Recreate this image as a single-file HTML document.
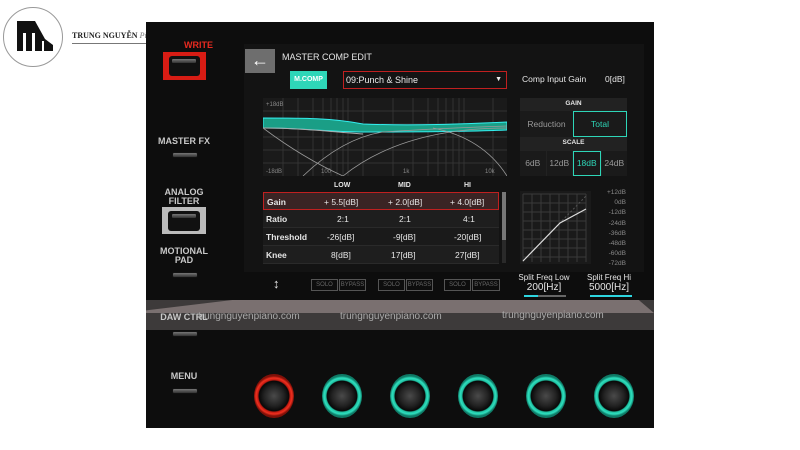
<!DOCTYPE html>
<html><head><style>
*{margin:0;padding:0;box-sizing:border-box}
body{width:800px;height:450px;background:#fff;position:relative;overflow:hidden;font-family:"Liberation Sans",sans-serif}
.a{position:absolute}
.lbl{position:absolute;color:#c8c8c8;font-size:9px;font-weight:bold;text-align:center;width:60px;line-height:9px}
.btn{position:absolute;width:26px;height:6px;background:linear-gradient(#777,#333);border-radius:2px;border:1px solid #111}
.t{position:absolute;color:#e6e6e6;font-size:9px}
.sb{position:absolute;border:1px solid #555;color:#666;font-size:6px;height:12px;line-height:10px;text-align:center}
.knob{position:absolute;width:40px;height:44px;border-radius:50%;background:radial-gradient(circle at 50% 50%,#4a4a4a 0,#222 10px,#080808 15px,#1fbfa0 16px,#2fe0bf 18px,#0e7a66 20px)}
.knob.r{background:radial-gradient(circle at 50% 50%,#4a4a4a 0,#222 10px,#080808 15px,#c01a10 16px,#f03020 18px,#801008 20px)}
.tr{position:absolute;left:263px;width:236px;height:18px;border-bottom:1px solid #2a2a2a;color:#e6e6e6;font-size:8.5px}
.tr span{position:absolute;top:4px}
</style></head><body>
<!-- logo -->
<div class="a" style="left:3px;top:7px;width:60px;height:60px;border-radius:50%;border:1px solid #999;background:#fff"></div>
<svg class="a" style="left:15px;top:19px" width="40" height="34" viewBox="0 0 40 34"><path d="M2 2H20L30 20L38 26V32H2Z" fill="#111"/><rect x="8" y="14" width="3" height="18" fill="#fff"/><rect x="17" y="14" width="3" height="18" fill="#fff"/><rect x="27" y="22" width="2" height="10" fill="#fff"/></svg>
<div class="a" style="left:72px;top:31px;font-family:'Liberation Serif',serif;font-size:8px;font-weight:bold;color:#222">TRUNG NGUYỄN <i style="font-weight:normal;color:#777">Pi</i></div>
<div class="a" style="left:72px;top:43px;width:75px;height:1px;background:#777"></div>
<!-- device -->
<div class="a" style="left:146px;top:22px;width:508px;height:406px;background:#0d0d0d"></div>
<div class="a" style="left:184px;top:40px;color:#e82a20;font-size:9px;font-weight:bold">WRITE</div>
<div class="a" style="left:163px;top:52px;width:43px;height:28px;background:#d81c14"></div>
<div class="a" style="left:169px;top:56px;width:31px;height:20px;background:#111;border-radius:3px"></div>
<div class="btn" style="left:171px;top:58px"></div>
<div class="lbl" style="left:154px;top:137px">MASTER FX</div>
<div class="btn" style="left:172px;top:152px"></div>
<div class="lbl" style="left:154px;top:188px">ANALOG<br>FILTER</div>
<div class="a" style="left:162px;top:207px;width:44px;height:27px;background:#bbb"></div>
<div class="a" style="left:168px;top:211px;width:32px;height:20px;background:#111;border-radius:3px"></div>
<div class="btn" style="left:171px;top:213px"></div>
<div class="lbl" style="left:154px;top:247px">MOTIONAL<br>PAD</div>
<div class="btn" style="left:172px;top:272px"></div>
<div class="btn" style="left:172px;top:331px"></div>
<div class="lbl" style="left:154px;top:372px">MENU</div>
<div class="btn" style="left:172px;top:388px"></div>
<!-- screen -->
<div class="a" style="left:244px;top:44px;width:400px;height:228px;background:#131313"></div>
<div class="a" style="left:245px;top:49px;width:30px;height:24px;background:#6e6e6e;color:#fff;font-size:18px;text-align:center;line-height:22px">←</div>
<div class="t" style="left:282px;top:52px;font-size:9px">MASTER COMP EDIT</div>
<div class="a" style="left:290px;top:71px;width:37px;height:18px;background:#2ed6b8;color:#fff;font-size:7px;font-weight:bold;text-align:center;line-height:18px">M.COMP</div>
<div class="a" style="left:343px;top:71px;width:164px;height:18px;border:1px solid #c02020;color:#eee;font-size:9px;line-height:16px;padding-left:2px">09:Punch &amp; Shine<span style="position:absolute;right:4px;font-size:7px">▼</span></div>
<div class="t" style="left:522px;top:74px;font-size:8.5px">Comp Input Gain</div>
<div class="t" style="left:605px;top:74px;font-size:8.5px">0[dB]</div>
<!-- graph -->
<svg class="a" style="left:263px;top:98px" width="244" height="78" viewBox="0 0 244 78">
<rect width="244" height="78" fill="#1a1a1a"/>
<g stroke="#333" stroke-width="1">
<path d="M0 13H244M0 26H244M0 39H244M0 52H244M0 65H244"/>
<path d="M20 0V78M35 0V78M50 0V78M60 0V78M68 0V78M74 0V78M80 0V78M85 0V78M100 0V78M130 0V78M150 0V78M165 0V78M175 0V78M183 0V78M190 0V78M196 0V78M201 0V78M230 0V78"/>
</g>
<path d="M0 20C40 20 70 20 100 26C150 28 200 26 244 24V32C200 34 150 34 100 34C70 34 40 30 0 30Z" fill="#1a9e86" stroke="#3ee" stroke-width="1"/>
<path d="M0 30C40 30 70 34 100 36" stroke="#aaa" fill="none"/>
<path d="M0 30Q40 60 80 78M40 78Q80 40 120 34Q180 30 244 28M80 78Q140 30 244 30M170 30Q220 40 244 78" stroke="#9a9a9a" fill="none" stroke-width=".8"/>
<text x="3" y="8" fill="#888" font-size="6" font-family="Liberation Sans">+18dB</text>
<text x="3" y="75" fill="#888" font-size="6" font-family="Liberation Sans">-18dB</text>
<text x="58" y="75" fill="#888" font-size="6" font-family="Liberation Sans">100</text>
<text x="140" y="75" fill="#888" font-size="6" font-family="Liberation Sans">1k</text>
<text x="222" y="75" fill="#888" font-size="6" font-family="Liberation Sans">10k</text>
</svg>
<!-- gain panel -->
<div class="a" style="left:520px;top:98px;width:107px;height:78px;background:#222"></div>
<div class="t" style="left:520px;top:100px;width:107px;text-align:center;font-size:6.5px;font-weight:bold">GAIN</div>
<div class="a" style="left:520px;top:111px;width:53px;height:26px;background:#1a1a1a;color:#999;font-size:8.5px;text-align:center;line-height:26px">Reduction</div>
<div class="a" style="left:573px;top:111px;width:54px;height:26px;background:#1a1a1a;border:1px solid #2ed6b8;color:#2ed6b8;font-size:8.5px;text-align:center;line-height:24px">Total</div>
<div class="t" style="left:520px;top:139px;width:107px;text-align:center;font-size:6.5px;font-weight:bold">SCALE</div>
<div class="a" style="left:520px;top:151px;width:107px;height:25px;display:flex;gap:1px">
<div style="flex:1;background:#1a1a1a;color:#999;font-size:8.5px;text-align:center;line-height:25px">6dB</div>
<div style="flex:1;background:#1a1a1a;color:#999;font-size:8.5px;text-align:center;line-height:25px">12dB</div>
<div style="flex:1;background:#1a1a1a;border:1px solid #2ed6b8;color:#2ed6b8;font-size:8.5px;text-align:center;line-height:23px">18dB</div>
<div style="flex:1;background:#1a1a1a;color:#999;font-size:8.5px;text-align:center;line-height:25px">24dB</div></div>
<!-- table -->
<div class="t" style="left:334px;top:182px;font-size:7px;font-weight:bold">LOW</div>
<div class="t" style="left:398px;top:182px;font-size:7px;font-weight:bold">MID</div>
<div class="t" style="left:464px;top:182px;font-size:7px;font-weight:bold">HI</div>
<div class="tr" style="top:192px;background:#3a2424;border:1px solid #c02020"><span style="left:3px;font-weight:bold">Gain</span><span style="left:60px">+ 5.5[dB]</span><span style="left:124px">+ 2.0[dB]</span><span style="left:186px">+ 4.0[dB]</span></div>
<div class="tr" style="top:210px;background:#1e1e1e"><span style="left:3px;font-weight:bold">Ratio</span><span style="left:74px">2:1</span><span style="left:136px">2:1</span><span style="left:200px">4:1</span></div>
<div class="tr" style="top:228px;background:#1a1a1a"><span style="left:3px;font-weight:bold">Threshold</span><span style="left:64px">-26[dB]</span><span style="left:130px">-9[dB]</span><span style="left:191px">-20[dB]</span></div>
<div class="tr" style="top:246px;background:#1e1e1e"><span style="left:3px;font-weight:bold">Knee</span><span style="left:68px">8[dB]</span><span style="left:128px">17[dB]</span><span style="left:192px">27[dB]</span></div>
<div class="a" style="left:502px;top:192px;width:4px;height:71px;background:#2a2a2a"></div>
<div class="a" style="left:502px;top:192px;width:4px;height:48px;background:#777"></div>
<!-- mini graph -->
<svg class="a" style="left:520px;top:191px" width="71" height="73" viewBox="0 0 71 73">
<rect width="71" height="73" fill="#1a1a1a"/>
<g stroke="#3a3a3a"><path d="M3 3V71M12 3V71M21 3V71M30 3V71M39 3V71M48 3V71M57 3V71M66 3V71M3 3H66M3 12H66M3 21H66M3 30H66M3 39H66M3 48H66M3 57H66M3 66H66"/></g>
<path d="M3 70L66 5" stroke="#555" stroke-dasharray="2 2"/>
<path d="M3 70L40 32L66 18" stroke="#ddd" fill="none" stroke-width="1.2"/>
</svg>
<div class="a" style="left:598px;top:188px;width:28px;color:#888;font-size:6.5px;text-align:right;line-height:10.2px">+12dB<br>0dB<br>-12dB<br>-24dB<br>-36dB<br>-48dB<br>-60dB<br>-72dB</div>
<!-- bottom row -->
<div class="t" style="left:273px;top:276px;font-size:13px;font-weight:bold">↕</div>
<div class="sb" style="left:311px;top:279px;width:27px">SOLO</div><div class="sb" style="left:339px;top:279px;width:27px">BYPASS</div>
<div class="sb" style="left:378px;top:279px;width:27px">SOLO</div><div class="sb" style="left:406px;top:279px;width:27px">BYPASS</div>
<div class="sb" style="left:444px;top:279px;width:27px">SOLO</div><div class="sb" style="left:472px;top:279px;width:28px">BYPASS</div>
<div class="t" style="left:516px;top:273px;font-size:8px;width:56px;text-align:center;line-height:9px">Split Freq Low<br><span style="font-size:10px;line-height:12px">200[Hz]</span></div>
<div class="a" style="left:524px;top:295px;width:42px;height:2px;background:#666"></div><div class="a" style="left:524px;top:295px;width:14px;height:2px;background:#2ed6e0"></div>
<div class="t" style="left:584px;top:273px;font-size:8px;width:50px;text-align:center;line-height:9px">Split Freq Hi<br><span style="font-size:10px;line-height:12px">5000[Hz]</span></div>
<div class="a" style="left:590px;top:295px;width:42px;height:2px;background:#2ed6e0"></div>
<!-- gray band -->
<div class="a" style="left:146px;top:300px;width:508px;height:30px;background:#3d3a3a"></div>
<div class="a" style="left:146px;top:300px;width:508px;height:13px;background:#7a7070;clip-path:polygon(17% 0,97% 0,100% 100%,0 100%,0 80%)"></div>
<div class="lbl" style="left:154px;top:313px">DAW CTRL</div>
<div class="a" style="left:198px;top:311px;color:#aaa;font-size:10px">trungnguyenpiano.com</div>
<div class="a" style="left:340px;top:311px;color:#aaa;font-size:10px">trungnguyenpiano.com</div>
<div class="a" style="left:502px;top:310px;color:#aaa;font-size:10px">trungnguyenpiano.com</div>
<!-- knobs -->
<div class="knob r" style="left:254px;top:374px"></div>
<div class="knob" style="left:322px;top:374px"></div>
<div class="knob" style="left:390px;top:374px"></div>
<div class="knob" style="left:458px;top:374px"></div>
<div class="knob" style="left:526px;top:374px"></div>
<div class="knob" style="left:594px;top:374px"></div>
</body></html>
